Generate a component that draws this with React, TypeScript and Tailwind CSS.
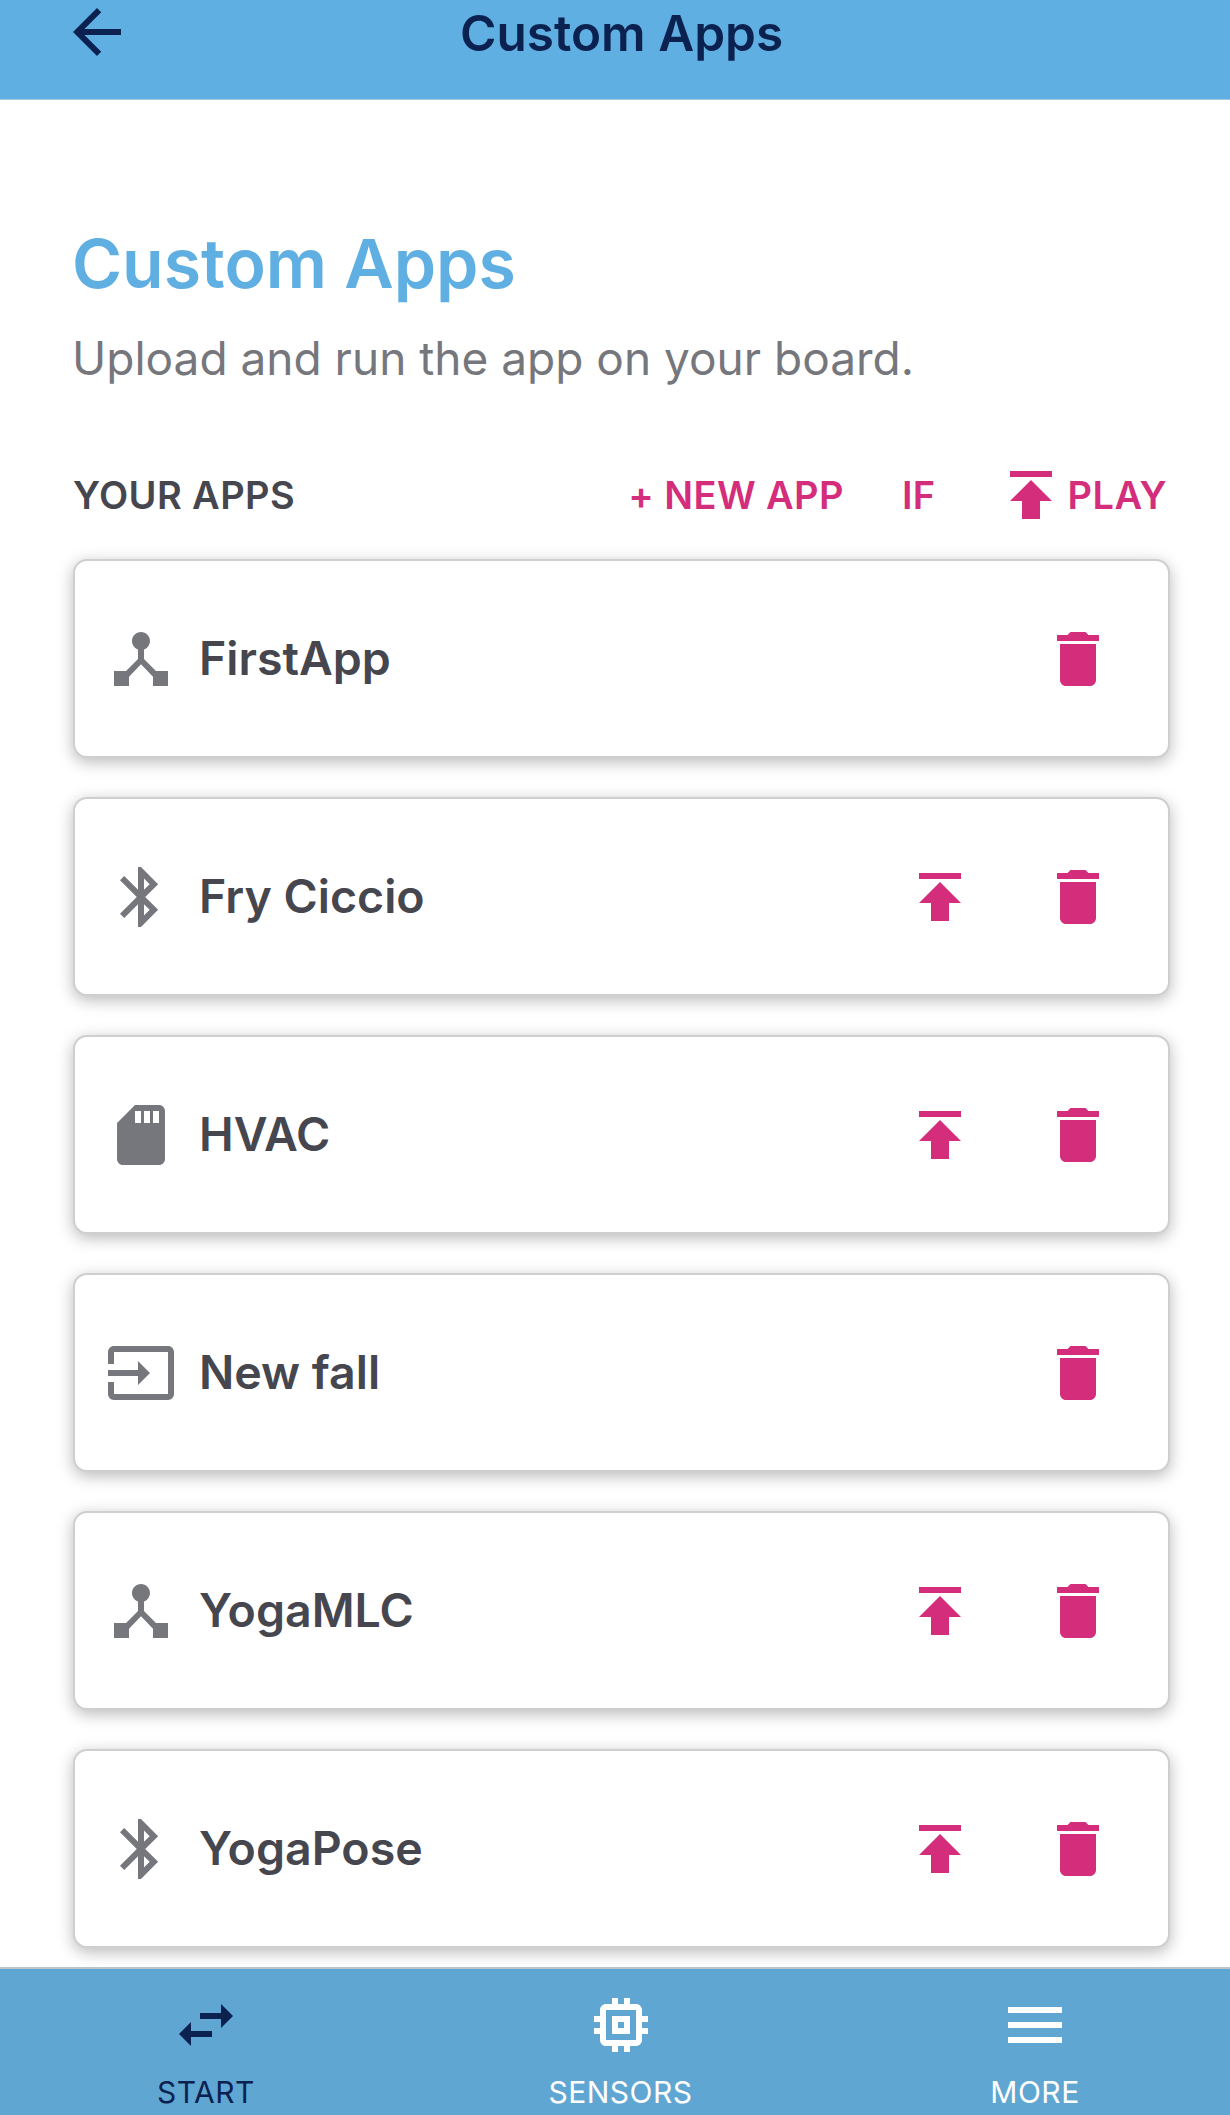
const ICONS = {
  hub: "M17 16l-4-4V8.82C14.16 8.4 15 7.3 15 6c0-1.66-1.34-3-3-3S9 4.34 9 6c0 1.3.84 2.4 2 2.82V12l-4 4H3v5h5v-3.05l4-4.2 4 4.2V21h5v-5h-4z",
  bluetooth: "M17.71 7.71L12 2h-1v7.59L6.41 5 5 6.41 10.59 12 5 17.59 6.41 19 11 14.41V22h1l5.71-5.71-4.3-4.29 4.3-4.29zM13 5.83l1.88 1.88L13 9.59V5.83zm1.88 10.46L13 18.17v-3.76l1.88 1.88z",
  sd: "M18 2h-8L4.02 8 4 20c0 1.1.9 2 2 2h12c1.1 0 2-.9 2-2V4c0-1.1-.9-2-2-2zm-6 6h-2V4h2v4zm3 0h-2V4h2v4zm3 0h-2V4h2v4z",
  input: "M21 3.01H3c-1.1 0-2 .9-2 2V9h2V4.99h18v14.03H3V15H1v4.01c0 1.1.9 1.98 2 1.98h18c1.1 0 2-.88 2-1.98v-14c0-1.1-.9-2-2-2zM11 16l4-4-4-4v3H1v2h10v3z",
  publish: "M5 4v2h14V4H5zm0 10h4v6h6v-6h4l-7-7-7 7z",
  trash: "M6 19c0 1.1.9 2 2 2h8c1.1 0 2-.9 2-2V7H6v12zM19 4h-3.5l-1-1h-5l-1 1H5v2h14V4z",
  back: "M20 11H7.83l5.59-5.59L12 4l-8 8 8 8 1.41-1.41L7.83 13H20v-2z",
  swap: "M6.99 11L3 15l3.99 4v-3H14v-2H6.99v-3zM21 9l-3.99-4v3H10v2h7.01v3L21 9z",
  chip: "M15 9H9v6h6V9zm-2 4h-2v-2h2v2zm8-2V9h-2V7c0-1.1-.9-2-2-2h-2V3h-2v2h-2V3H9v2H7c-1.1 0-2 .9-2 2v2H3v2h2v2H3v2h2v2c0 1.1.9 2 2 2h2v2h2v-2h2v2h2v-2h2c1.1 0 2-.9 2-2v-2h2v-2h-2v-2h2zm-4 6H7V7h10v10z",
  menu: "M3 18h18v-2H3v2zm0-5h18v-2H3v2zm0-7v2h18V6H3z",
};

type IconName = keyof typeof ICONS;

function Icon({ name, className }: { name: IconName; className: string }) {
  return (
    <svg viewBox="0 0 24 24" fill="currentColor" className={`shrink-0 ${className}`}>
      <path d={ICONS[name]} />
    </svg>
  );
}

const APPS: { name: string; icon: IconName; upload: boolean }[] = [
  { name: "FirstApp", icon: "hub", upload: false },
  { name: "Fry Ciccio", icon: "bluetooth", upload: true },
  { name: "HVAC", icon: "sd", upload: true },
  { name: "New fall", icon: "input", upload: false },
  { name: "YogaMLC", icon: "hub", upload: true },
  { name: "YogaPose", icon: "bluetooth", upload: true },
];

function AppCard({ name, icon, upload }: { name: string; icon: IconName; upload: boolean }) {
  return (
    <div className="flex h-[199px] items-center rounded-[14px] border-2 border-[#cfcfd2] bg-white pl-[30px] pr-[54px] shadow-[0_4px_16px_rgba(0,0,0,0.28)]">
      <Icon name={icon} className="size-[72px] text-[#76777c]" />
      <span className="ml-[22px] flex-1 text-[46.5px] font-semibold leading-none text-[#46464f]">{name}</span>
      {upload && <Icon name="publish" className="size-[72px] text-[#d42d7c]" />}
      <Icon name="trash" className="ml-[66px] size-[72px] text-[#d42d7c]" />
    </div>
  );
}

export default function App() {
  return (
    <div className="flex h-[2115px] w-[1230px] flex-col overflow-hidden bg-white font-['Inter',sans-serif]">
      {/* top bar */}
      <header className="flex h-[100px] shrink-0 items-start border-b border-[#a9c6dc] bg-[#60afe2] pl-[61px] text-[#0b2250]">
        <Icon name="back" className="-mt-[4px] size-[72px]" />
        <h1 className="ml-[327px] pt-[6px] text-[49.5px] font-semibold leading-[54px]">Custom Apps</h1>
      </header>

      <main className="flex-1 pl-[73px] pr-[60px] pt-[124px]">
        <h2 className="-ml-[1px] text-[68px] font-semibold leading-[78px] text-[#60afe2]">Custom Apps</h2>
        <p className="-ml-[1px] mt-[28px] text-[46px] leading-[56px] text-[#76777c]">Upload and run the app on your board.</p>

        <div className="mt-[73px] flex h-[72px] items-center justify-between pr-[3px]">
          <span className="text-[38px] font-semibold tracking-[0.4px] text-[#46464f]">YOUR APPS</span>
          <div className="flex items-center text-[38px] font-semibold tracking-[0.4px] text-[#d42d7c]">
            <span>+ NEW APP</span>
            <span className="ml-[58px]">IF</span>
            <Icon name="publish" className="ml-[59px] size-[72px]" />
            <span className="ml-[1px]">PLAY</span>
          </div>
        </div>

        <div className="mt-[28px] flex flex-col gap-[39px]">
          {APPS.map((app) => (
            <AppCard key={app.name} {...app} />
          ))}
        </div>
      </main>

      {/* bottom tabs */}
      <nav className="flex h-[148px] shrink-0 justify-between border-t-2 border-[#b9c4cc] bg-[#60a6d2] pl-[118px] pr-[107px] pt-[20px] text-white">
        <div className="flex w-[176px] flex-col items-center text-[#0b2250]">
          <Icon name="swap" className="size-[72px]" />
          <span className="mt-[13px] text-[30px] leading-[36px] tracking-[0.5px]">START</span>
        </div>
        <div className="flex w-[176px] flex-col items-center">
          <Icon name="chip" className="size-[72px]" />
          <span className="mt-[13px] text-[30px] leading-[36px] tracking-[0.5px]">SENSORS</span>
        </div>
        <div className="flex w-[176px] flex-col items-center">
          <Icon name="menu" className="size-[72px]" />
          <span className="mt-[13px] text-[30px] leading-[36px] tracking-[0.5px]">MORE</span>
        </div>
      </nav>
    </div>
  );
}
